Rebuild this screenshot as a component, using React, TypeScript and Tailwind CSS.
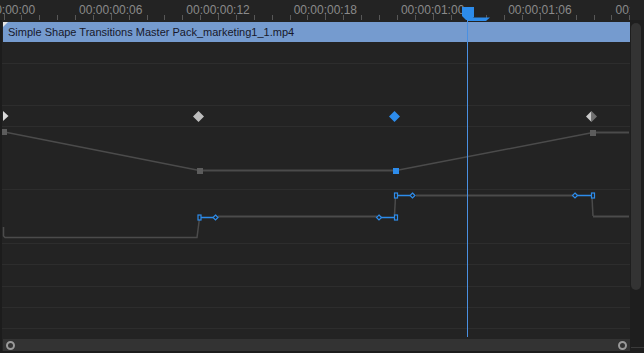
import React from 'react';

const FRAME = 17.88;
const ORIGIN = 3.5;
const BLUE = '#2d8ceb';
const CURVE = '#4b4b4b';

const labels = ['00:00:00:00', '00:00:00:06', '00:00:00:12', '00:00:00:18', '00:00:01:00', '00:00:01:06', '00:00:01:12'];

function Ruler() {
    const ticks = Array.from({ length: 36 }, (_, i) => i);
    return (
        <div className="flex shrink-0 h-[20px]">
            <svg width={630} height={20} className="block">
                {ticks.map((i) => {
                    const x = Math.round(ORIGIN + i * FRAME) + 0.5;
                    const major = i % 6 === 0;
                    return <line key={i} x1={x} x2={x} y1={major ? 13 : 15} y2={20} stroke="#575757" />;
                })}
                {labels.map((t, i) => (
                    <text key={t} x={ORIGIN + i * 6 * FRAME} y={14} textAnchor="middle" fill="#8a8a8a" fontSize={12} fontFamily="'Liberation Sans', Arial, sans-serif">
                        {t}
                    </text>
                ))}
            </svg>
            <div className="flex-1" />
        </div>
    );
}

function Diamond({ x, y, r, fill }: { x: number; y: number; r: number; fill: string }) {
    return <polygon points={`${x},${y - r} ${x + r},${y} ${x},${y + r} ${x - r},${y}`} fill={fill} />;
}

// small outlined handle diamond + square, used on the bezier graph
function Handle({ x, y }: { x: number; y: number }) {
    return <polygon points={`${x},${y - 2.5} ${x + 2.5},${y} ${x},${y + 2.5} ${x - 2.5},${y}`} fill="#232323" stroke={BLUE} strokeWidth={1.2} />;
}

function Knot({ x, y }: { x: number; y: number }) {
    return <rect x={x - 1.5} y={y - 2.5} width={3} height={5} fill="#232323" stroke={BLUE} strokeWidth={1.2} />;
}

function GraphOverlay() {
    return (
        <svg width={644} height={353} className="absolute top-0 left-0 pointer-events-none">
            {/* keyframe row */}
            <polygon points="3,111 8.5,116 3,121" fill="#d9d9d9" />
            <Diamond x={198.5} y={116.5} r={5.5} fill="#bdbdbd" />
            <Diamond x={394.5} y={116.5} r={5.5} fill={BLUE} />
            <polygon points="591.5,111 591.5,122 586,116.5" fill="#cacaca" />
            <polygon points="591.5,111 597,116.5 591.5,122" fill="#707070" />

            {/* value graph */}
            <polyline points="4.5,132 199.5,170.5" fill="none" stroke={CURVE} strokeWidth={1.5} />
            <line x1={199} y1={170.5} x2={396} y2={170.5} stroke={CURVE} strokeWidth={2} />
            <polyline points="396,170.5 593,132.5" fill="none" stroke={CURVE} strokeWidth={1.5} />
            <line x1={593} y1={132.5} x2={629} y2={132.5} stroke={CURVE} strokeWidth={2} />
            <rect x={2} y={129} width={5} height={6} fill="#5c5c5c" />
            <rect x={197} y={168} width={6} height={6} fill="#5c5c5c" />
            <rect x={393} y={168} width={6} height={6} fill={BLUE} />
            <rect x={590} y={130} width={6} height={6} fill="#5c5c5c" />

            {/* speed / hold graph */}
            <polyline points="3.5,227 3.5,236 5,237.5 197,237.5 199.5,218" fill="none" stroke={CURVE} strokeWidth={1.5} />
            <line x1={218} y1={216.5} x2={377} y2={216.5} stroke={CURVE} strokeWidth={2} />
            <polyline points="394.5,215 395.5,197" fill="none" stroke={CURVE} strokeWidth={1.5} />
            <line x1={416} y1={195.5} x2={573} y2={195.5} stroke={CURVE} strokeWidth={2} />
            <polyline points="592,197.5 593,216" fill="none" stroke={CURVE} strokeWidth={1.5} />
            <line x1={593} y1={216.5} x2={629} y2={216.5} stroke={CURVE} strokeWidth={2} />

            <line x1={201} y1={217.5} x2={213} y2={217.5} stroke={BLUE} strokeWidth={1.5} />
            <line x1={381} y1={217.5} x2={394} y2={217.5} stroke={BLUE} strokeWidth={1.5} />
            <line x1={398} y1={195.5} x2={410} y2={195.5} stroke={BLUE} strokeWidth={1.5} />
            <line x1={577} y1={195.5} x2={591} y2={195.5} stroke={BLUE} strokeWidth={1.5} />
            <Knot x={199.5} y={217.5} />
            <Handle x={215.5} y={217.5} />
            <Handle x={379} y={217.5} />
            <Knot x={396} y={217.5} />
            <Knot x={396} y={195.5} />
            <Handle x={412.5} y={195.5} />
            <Handle x={575} y={195.5} />
            <Knot x={593} y={195.5} />

            {/* playhead */}
            <line x1={467.5} y1={16} x2={467.5} y2={337} stroke="#4a90e2" strokeWidth={1} />
            <polygon points="462,7 474,7 474,17 470,20 466,20 462,16" fill={BLUE} />
            <polygon points="468,17.5 490,17.5 486,21 468,21" fill={BLUE} />
        </svg>
    );
}

function Row({ h }: { h: string }) {
    return <div className={`${h} border-b border-[#2d2d2d]`} />;
}

export default function App() {
    return (
        <div className="relative w-[644px] h-[353px] overflow-hidden bg-[#232323] flex flex-col" style={{ fontFamily: "'Liberation Sans', Arial, sans-serif" }}>
            <Ruler />
            <div className="flex flex-1 min-h-0">
                {/* tracks */}
                <div className="w-[630px] flex flex-col border-l-2 border-[#1c1c1c]">
                    <div className="h-[2px]" />
                    <div className="relative h-[20px] ml-px bg-[#759bcf] flex items-center pl-[5px]">
                        <svg width={6} height={6} className="absolute top-0 left-0">
                            <polygon points="0,0 5,0 0,5" fill="#e6e6e6" />
                        </svg>
                        <span className="text-[11px] leading-none text-[#17182a] whitespace-nowrap">Simple Shape Transitions Master Pack_marketing1_1.mp4</span>
                    </div>
                    <Row h="h-[22px]" />
                    <Row h="h-[42px]" />
                    <Row h="h-[21px]" />
                    <Row h="h-[63px]" />
                    <Row h="h-[54px]" />
                    <Row h="h-[21px]" />
                    <Row h="h-[22px]" />
                    <Row h="h-[21px]" />
                    <Row h="h-[21px]" />
                    <div className="h-[10px]" />
                    {/* horizontal zoom bar */}
                    <div className="h-[12px] ml-px bg-[#333333] flex items-center justify-between px-[3px]">
                        <div className="w-[9px] h-[9px] rounded-full border-2 border-[#9a9a9a]" />
                        <div className="w-[9px] h-[9px] rounded-full border-2 border-[#9a9a9a]" />
                    </div>
                    <div className="flex-1 bg-[#1c1c1c]" />
                </div>
                {/* vertical scrollbar */}
                <div className="flex-1 bg-[#1e1e1e] flex flex-col pt-[3px] pl-px">
                    <div className="w-[10px] h-[267px] rounded-full bg-[#333333]" />
                    <div className="flex-1" />
                    <div className="h-px mb-[5px] bg-[#3a3a3a]" />
                </div>
            </div>
            <GraphOverlay />
        </div>
    );
}
